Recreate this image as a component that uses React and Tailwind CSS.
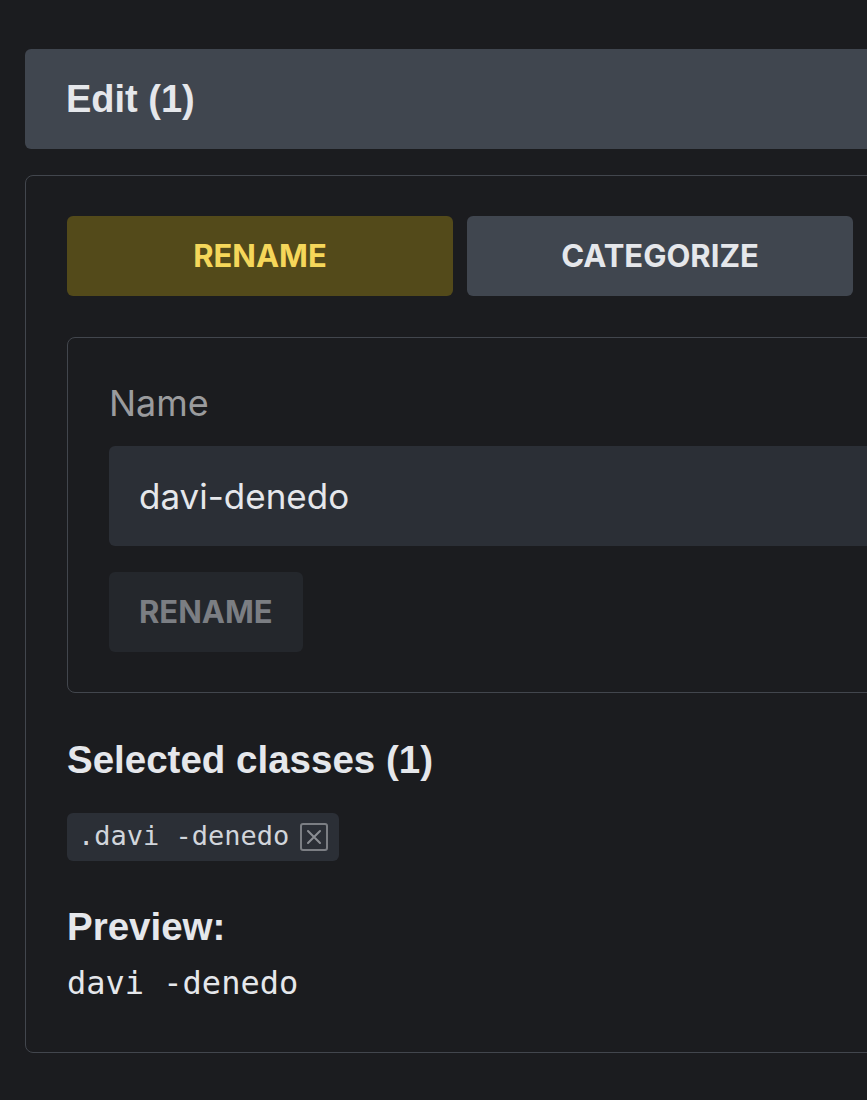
const tabs = [
  { label: 'RENAME', active: true },
  { label: 'CATEGORIZE', active: false },
  { label: 'DELETE', active: false },
];

function App() {
  return (
    <div className="min-h-screen w-full overflow-hidden bg-[#1b1c1f] font-['Inter',sans-serif]">
      <div className="w-[1295px] pl-[25px] pt-[49px] pb-10">
        {/* Header */}
        <div className="h-[100px] rounded-md bg-[#40464f] flex items-center px-[41px]">
          <h1 className="font-['Liberation_Sans',Arial,sans-serif] text-[38px] font-bold text-[#e5e7eb] leading-none">
            Edit (1)
          </h1>
        </div>

        {/* Panel */}
        <div className="mt-[26px] rounded-lg border border-[#42464d] px-[41px] pt-[40px] pb-[53px]">
          <div className="grid grid-cols-3 gap-[14px]">
            {tabs.map((t) => (
              <button
                key={t.label}
                className={
                  t.active
                    ? 'h-[80px] rounded-md bg-[#534a1a] text-[#f5d75a] text-[31px] font-bold'
                    : 'h-[80px] rounded-md bg-[#40464f] text-[#e5e7eb] text-[31px] font-bold'
                }
              >
                {t.label}
              </button>
            ))}
          </div>

          {/* Rename box */}
          <div className="mt-[41px] rounded-lg border border-[#42464d] px-[41px] pt-[47px] pb-[40px]">
            <label className="block text-[36px] leading-none text-[#9a9b9d]">Name</label>
            <div className="mt-[25px] h-[100px] rounded-md bg-[#2b2f36] flex items-center px-[30px] text-[35px] text-[#e5e7eb]">
              davi-denedo
            </div>
            <button className="mt-[26px] h-[80px] px-[30px] rounded-md bg-[#24272c] text-[31px] font-bold text-[#7b7e83]">
              RENAME
            </button>
          </div>

          {/* Selected classes */}
          <h2 className="mt-[48px] font-['Liberation_Sans',Arial,sans-serif] text-[38.5px] font-bold leading-none text-[#e5e7eb]">
            Selected classes (1)
          </h2>
          <div className="mt-[33px] inline-flex items-center gap-[11px] h-[48px] rounded-md bg-[#2b2f36] pl-[11px] pr-[11px]">
            <span className="font-['DejaVu_Sans_Mono',monospace] text-[27px] text-[#d1d5db]">.davi -denedo</span>
            <span className="flex items-center justify-center w-[28px] h-[28px] rounded-[3px] border-2 border-[#7b7e83] text-[#8b8e93]">
              <svg width="16" height="16" viewBox="0 0 16 16" fill="none" stroke="currentColor" strokeWidth="2" strokeLinecap="round">
                <path d="M2 2L14 14M14 2L2 14" />
              </svg>
            </span>
          </div>

          <h2 className="mt-[47px] font-['Liberation_Sans',Arial,sans-serif] text-[38.5px] font-bold leading-none text-[#e5e7eb]">
            Preview:
          </h2>
          <div className="mt-[21px] font-['DejaVu_Sans_Mono',monospace] text-[32px] leading-none text-[#e5e7eb]">
            davi -denedo
          </div>
        </div>
      </div>
    </div>
  );
}

export default App;
